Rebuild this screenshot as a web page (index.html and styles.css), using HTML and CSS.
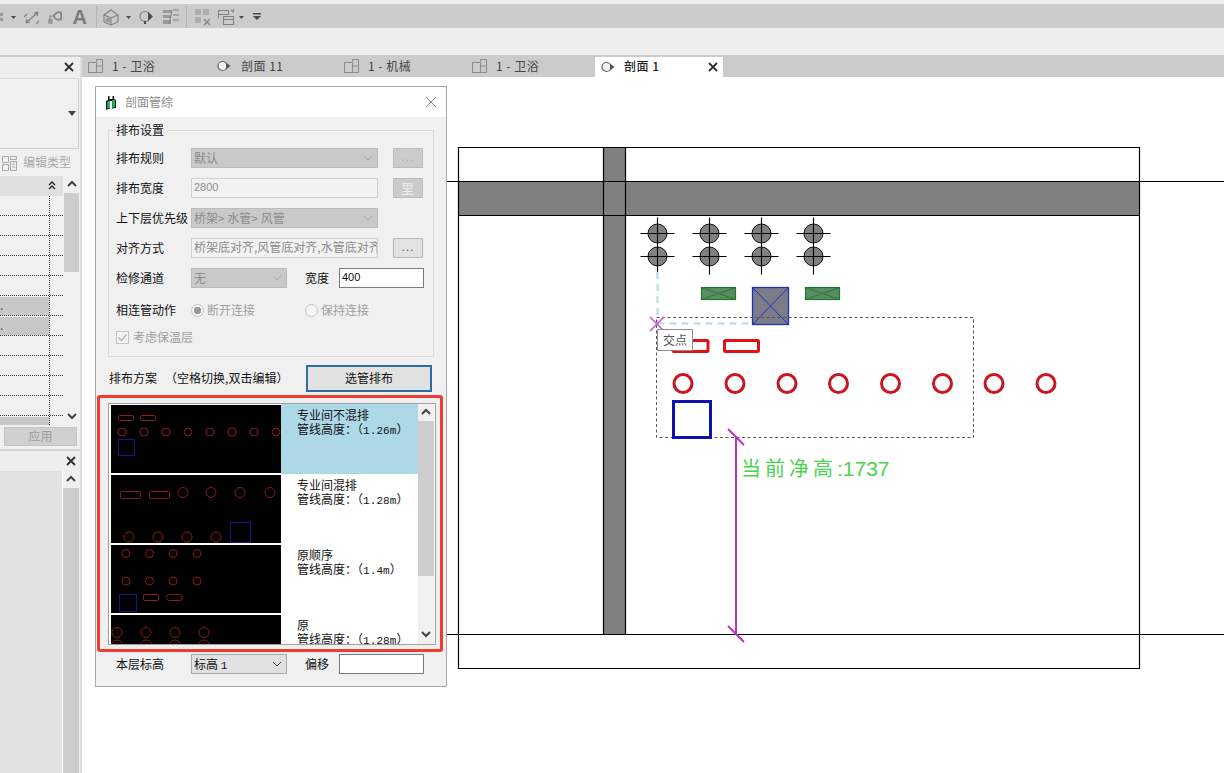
FILE: index.html
```html
<!DOCTYPE html>
<html lang="zh-CN">
<head>
<meta charset="utf-8">
<title>剖面管综</title>
<link rel="stylesheet" href="styles.css">
</head>
<body>
<div class="app">
  <div class="toolbar">
    <svg class="toolbar-icons" width="270" height="24" viewBox="0 4 270 24">
      <path class="ic-fill" d="M0 13h3v3H0zM0 18h3v3H0z"/>
      <path class="ic-dark" d="M11 16h5l-2.500 3z"/>
      <path class="ic-line" d="M26 23L38 12M26 23l1-4M26 23l4-1M38 12l-4 1M38 12l-1 4M24 17l3-3M36 24l3-3"/>
      <path class="ic-line" d="M50 22v-6h5M54 15l4-3h3v8h-3l-4-2z"/><circle class="ic-line" cx="58" cy="16" r="3.500"/><rect class="ic-line" x="49" y="20" width="3" height="3"/>
      <text class="ic-a" x="72.500" y="24">A</text>
      <path class="ic-sep" d="M96.500 6v22M186.500 6v22"/>
      <path class="ic-line" d="M104 15l7-5 7 5v7l-7 3-7-3zM104 15l7 3 7-3M111 18v7"/><circle class="ic-fill" cx="108" cy="20" r="2.500"/>
      <path class="ic-dark" d="M126 16h5l-2.500 3z"/>
      <circle class="ic-line" cx="145" cy="16.500" r="5"/><path class="ic-dark" d="M148 12l5 4.500-5 4.500zM144 21h2v3h-2z"/>
      <path class="ic-fill" d="M163 10h8v3h-8zM163 15h8v3h-8zM163 20h8v4h-8z"/><path class="ic-line" d="M173 10h6M173 15h6M173 20h6M172 10l-3 14"/>
      <path class="ic-pale" d="M195 9h6v6h-6zM203 9h6v6h-6zM195 17h6v6h-6z"/><path class="ic-xstroke" d="M204 19l6 6m0-6l-6 6"/>
      <path class="ic-line" d="M218.500 10.500h10v4h-10zM218.500 14.500v4M223.500 16.500h10v8h-10zM223.500 19.500h10M231 10l2 2 1-3"/>
      <path class="ic-dark" d="M239 16h5l-2.500 3z"/>
      <path class="ic-dark" d="M253 13h8v1.500h-8zM253 16h8l-4 4z"/>
    </svg>
  </div>
  <div class="subbar"></div>
  <div class="tabbar">
    <div class="panel-head"><svg class="x-icon" width="10" height="10" viewBox="0 0 10 10"><path d="M1 1l8 8M9 1l-8 8"/></svg></div>
    <div class="tab"><svg class="tab-icon" width="16" height="14" viewBox="0 0 16 14"><path d="M.5 3.500h8V.5h6v13H.5zM8.500 3.500v10M8.500 7h6"/></svg><span>1 - 卫浴</span></div>
    <div class="tab"><svg class="sec-icon" width="16" height="14" viewBox="0 0 16 14"><circle cx="5.500" cy="7" r="4.500"/><path d="M9 3.500L13.500 7 9 10.500z"/></svg><span>剖面 11</span></div>
    <div class="tab"><svg class="tab-icon" width="16" height="14" viewBox="0 0 16 14"><path d="M.5 3.500h8V.5h6v13H.5zM8.500 3.500v10M8.500 7h6"/></svg><span>1 - 机械</span></div>
    <div class="tab"><svg class="tab-icon" width="16" height="14" viewBox="0 0 16 14"><path d="M.5 3.500h8V.5h6v13H.5zM8.500 3.500v10M8.500 7h6"/></svg><span>1 - 卫浴</span></div>
    <div class="tab tab-active"><svg class="sec-icon" width="16" height="14" viewBox="0 0 16 14"><circle cx="5.500" cy="7" r="4.500"/><path d="M9 3.500L13.500 7 9 10.500z"/></svg><span class="tab-title">剖面 1</span><svg class="x-icon" width="10" height="10" viewBox="0 0 10 10"><path d="M1 1l8 8M9 1l-8 8"/></svg></div>
  </div>
  <div class="main">
    <aside class="side">
      <div class="type-box"><svg class="type-arrow" width="8" height="5" viewBox="0 0 8 5"><path d="M0 0h8L4 5z"/></svg></div>
      <div class="edit-row">
        <svg class="edit-icon" width="16" height="16" viewBox="0 0 16 16"><path d="M.5 1.500h6v6h-6zM.5 9.500h6v6h-6zM8.500 1.500h6v3h-6zM8.500 6.500h6v9h-6zM10 9h3M10 12h3"/></svg>
        <span>编辑类型</span>
      </div>
      <div class="prop-area">
        <div class="prop-table">
          <div class="prop-head"><svg width="8" height="10" viewBox="0 0 8 10"><path d="M1 4l3-3 3 3M1 8l3-3 3 3"/></svg></div>
          <div class="prop-row"><i></i></div>
          <div class="prop-row"><i></i></div>
          <div class="prop-row"><i></i></div>
          <div class="prop-row"><i></i></div>
          <div class="prop-row"><i></i></div>
          <div class="prop-row"><i class="cell-gray">.</i></div>
          <div class="prop-row"><i class="cell-gray">.</i></div>
          <div class="prop-row"><i></i></div>
          <div class="prop-row"><i></i></div>
          <div class="prop-row"><i></i></div>
          <div class="prop-row"><i></i></div>
          <div class="prop-row prop-last"><i class="cell-gray"></i></div>
        </div>
        <div class="side-scroll">
          <svg class="chev" width="16" height="17" viewBox="0 0 16 17"><path d="M4 10l4-4 4 4"/></svg>
          <div class="side-thumb"></div>
          <svg class="chev chev-down" width="16" height="17" viewBox="0 0 16 17"><path d="M4 7l4 4 4-4"/></svg>
        </div>
      </div>
      <div class="apply-row"><div class="apply">应用</div></div>
      <div class="panel-head panel-head-2"><svg class="x-icon" width="10" height="10" viewBox="0 0 10 10"><path d="M1 1l8 8M9 1l-8 8"/></svg></div>
      <div class="browser">
        <div class="browser-list"></div>
        <div class="browser-scroll">
          <svg class="chev" width="16" height="17" viewBox="0 0 16 17"><path d="M4 10l4-4 4 4"/></svg>
          <div class="browser-thumb"></div>
        </div>
      </div>
    </aside>
    <div class="canvas">
      <svg class="drawing" width="1142" height="696" viewBox="82 77 1142 696">
        <defs>
          <g id="hanger">
            <circle class="d-hanger" cx="0" cy="0" r="9.500"/>
            <circle class="d-hanger" cx="0" cy="23" r="9.500"/>
            <path class="d-thin" d="M-17 0H17M-17 23H17M0 -16V41"/>
          </g>
        </defs>
        <rect class="d-gray" x="458" y="181" width="681" height="34"/>
        <rect class="d-gray" x="603" y="148" width="22" height="486"/>
        <path class="d-frame" d="M458.500 147.500H1139.500V668.500H458.500ZM458.500 215.500H1139.500M603.500 147.500V634.500M625.500 147.500V634.500M400 181.500H1224M400 634.500H1224"/>
        <use href="#hanger" x="657.500" y="233.500"/>
        <use href="#hanger" x="709.500" y="233.500"/>
        <use href="#hanger" x="761.500" y="233.500"/>
        <use href="#hanger" x="813.500" y="233.500"/>
        <path class="d-guide" d="M657.500 272V324M657.500 323.500H752"/>
        <g class="d-green"><rect x="701.500" y="287.500" width="34" height="12"/><path d="M701.500 287.500l34 12m0-12l-34 12"/></g>
        <g class="d-green"><rect x="805.500" y="287.500" width="34" height="12"/><path d="M805.500 287.500l34 12m0-12l-34 12"/></g>
        <g class="d-duct"><rect x="752.500" y="287.500" width="36" height="37"/><path d="M752.500 287.500l36 37m0-37l-36 37"/></g>
        <rect class="d-select" x="656.500" y="317.500" width="317" height="120"/>
        <path class="d-pink" d="M650 317l14 14M664 317l-14 14"/>
        <rect class="d-red" x="673" y="340.500" width="35" height="11" rx="1"/>
        <rect class="d-red" x="724.500" y="340.500" width="34" height="11" rx="1"/>
        <circle class="d-pipe" cx="683" cy="383.500" r="9"/>
        <circle class="d-pipe" cx="735" cy="383.500" r="9"/>
        <circle class="d-pipe" cx="787" cy="383.500" r="9"/>
        <circle class="d-pipe" cx="838.500" cy="383.500" r="9"/>
        <circle class="d-pipe" cx="890.500" cy="383.500" r="9"/>
        <circle class="d-pipe" cx="942.500" cy="383.500" r="9"/>
        <circle class="d-pipe" cx="994" cy="383.500" r="9"/>
        <circle class="d-pipe" cx="1046" cy="383.500" r="9"/>
        <rect class="d-blue" x="673.500" y="401.500" width="37" height="36"/>
        <path class="d-dim" d="M736 437V634M728 429l16 16M728 626l16 16"/>
        <text class="d-note" x="741" y="476"><tspan class="d-note-cjk">当前净高</tspan>:1737</text>
      </svg>
      <div class="tooltip">交点</div>

      <div class="dialog">
        <div class="dlg-title">
          <svg class="dlg-logo" width="12" height="15" viewBox="0 0 12 15"><path class="logo-black" d="M1 6l2-1V1h1.500v3h3V1H9v3l2 1v8l-4 .5V6H5v7.500L1 15z"/><path class="logo-green" d="M2.200 6.800L5 5.500v7.200l-2.800 1zM7.200 5h2.800v7.200l-2.800.5z"/></svg>
          <span>剖面管综</span>
          <svg class="dlg-close" width="12" height="12" viewBox="0 0 12 12"><path d="M1 1l10 10M11 1L1 11"/></svg>
        </div>
        <fieldset class="group">
          <legend>排布设置</legend>
          <div class="row">
            <label class="lbl">排布规则</label>
            <div class="combo combo-wide"><span>默认</span><svg width="10" height="6" viewBox="0 0 10 6"><path d="M1 1l4 4 4-4"/></svg></div>
            <div class="btn btn-off">...</div>
          </div>
          <div class="row">
            <label class="lbl">排布宽度</label>
            <div class="edit edit-off num-text">2800</div>
            <div class="btn btn-off btn-glyph">里</div>
          </div>
          <div class="row">
            <label class="lbl">上下层优先级</label>
            <div class="combo combo-wide"><span>桥架&gt; 水管&gt; 风管</span><svg width="10" height="6" viewBox="0 0 10 6"><path d="M1 1l4 4 4-4"/></svg></div>
          </div>
          <div class="row">
            <label class="lbl">对齐方式</label>
            <div class="edit edit-off">桥架底对齐,风管底对齐,水管底对齐</div>
            <div class="btn btn-on">...</div>
          </div>
          <div class="row">
            <label class="lbl">检修通道</label>
            <div class="combo combo-short"><span>无</span><svg width="10" height="6" viewBox="0 0 10 6"><path d="M1 1l4 4 4-4"/></svg></div>
            <label class="lbl-short">宽度</label>
            <div class="edit edit-on num-text">400</div>
          </div>
          <div class="row row-radio">
            <label class="lbl">相连管动作</label>
            <div class="opt opt-first"><span class="radio radio-on"></span><span class="opt-text">断开连接</span></div>
            <div class="opt"><span class="radio"></span><span class="opt-text">保持连接</span></div>
          </div>
          <div class="row row-check">
            <svg class="check" width="13" height="13" viewBox="0 0 13 13"><rect x=".5" y=".5" width="12" height="12"/><path d="M2.500 6.500l3 3 5-6"/></svg>
            <span class="opt-text">考虑保温层</span>
          </div>
        </fieldset>
        <div class="plan-row">
          <span class="plan-caption">排布方案   （空格切换,双击编辑）</span>
          <div class="pick-btn">选管排布</div>
        </div>
        <div class="highlight">
          <div class="plan-list">
            <div class="plan-items">
              <div class="plan plan-selected">
                <svg class="thumb" width="170" height="68" viewBox="0 0 170 68">
                  <rect class="t-red" x="7.500" y="10.500" width="15" height="5" rx="1"/><rect class="t-red" x="29.500" y="10.500" width="15" height="5" rx="1"/>
                  <circle class="t-red" cx="11" cy="27" r="4"/><circle class="t-red" cx="33" cy="27" r="4"/><circle class="t-red" cx="55" cy="27" r="4"/><circle class="t-red" cx="77" cy="27" r="4"/><circle class="t-red" cx="99" cy="27" r="4"/><circle class="t-red" cx="121" cy="27" r="4"/><circle class="t-red" cx="143" cy="27" r="4"/><circle class="t-red" cx="165" cy="27" r="4"/>
                  <rect class="t-blue" x="7.500" y="34.500" width="16" height="16"/>
                </svg>
                <div class="plan-text"><div>专业间不混排</div><div>管线高度：（<span class="num">1.26m</span>）</div></div>
              </div>
              <div class="plan">
                <svg class="thumb" width="170" height="68" viewBox="0 0 170 68">
                  <rect class="t-red" x="9.500" y="16.500" width="20" height="7" rx="1"/><rect class="t-red" x="38.500" y="16.500" width="20" height="7" rx="1"/>
                  <circle class="t-red" cx="72" cy="17.500" r="5"/><circle class="t-red" cx="100" cy="17.500" r="5"/><circle class="t-red" cx="129" cy="17.500" r="5"/><circle class="t-red" cx="159" cy="17.500" r="5"/>
                  <circle class="t-red" cx="18" cy="62" r="5"/><circle class="t-red" cx="47" cy="62" r="5"/><circle class="t-red" cx="76" cy="62" r="5"/><circle class="t-red" cx="105" cy="62" r="5"/>
                  <rect class="t-blue" x="119.500" y="47.500" width="20" height="20"/>
                </svg>
                <div class="plan-text"><div>专业间混排</div><div>管线高度：（<span class="num">1.28m</span>）</div></div>
              </div>
              <div class="plan">
                <svg class="thumb" width="170" height="68" viewBox="0 0 170 68">
                  <circle class="t-red" cx="15" cy="8.500" r="4"/><circle class="t-red" cx="38.500" cy="8.500" r="4"/><circle class="t-red" cx="62" cy="8.500" r="4"/><circle class="t-red" cx="86" cy="8.500" r="4"/>
                  <circle class="t-red" cx="15" cy="36" r="4"/><circle class="t-red" cx="38.500" cy="36" r="4"/><circle class="t-red" cx="62" cy="36" r="4"/><circle class="t-red" cx="86" cy="36" r="4"/>
                  <rect class="t-blue" x="8.500" y="49.500" width="17" height="17"/>
                  <rect class="t-red" x="32.500" y="49.500" width="15" height="6" rx="1"/><rect class="t-red" x="55.500" y="49.500" width="16" height="6" rx="3"/>
                </svg>
                <div class="plan-text"><div>原顺序</div><div>管线高度：（<span class="num">1.4m</span>）</div></div>
              </div>
              <div class="plan">
                <svg class="thumb" width="170" height="68" viewBox="0 0 170 68">
                  <circle class="t-red" cx="6" cy="17.500" r="5"/><circle class="t-red" cx="35" cy="17.500" r="5"/><circle class="t-red" cx="64" cy="17.500" r="5"/><circle class="t-red" cx="93" cy="17.500" r="5"/>
                  <circle class="t-red" cx="6" cy="31" r="6"/><circle class="t-red" cx="35" cy="31" r="6"/><circle class="t-red" cx="64" cy="31" r="6"/><circle class="t-red" cx="93" cy="31" r="6"/>
                </svg>
                <div class="plan-text"><div>原</div><div>管线高度：（<span class="num">1.28m</span>）</div></div>
              </div>
            </div>
            <div class="plan-scroll">
              <svg class="chev" width="16" height="17" viewBox="0 0 16 17"><path d="M4 10l4-4 4 4"/></svg>
              <div class="plan-thumb"></div>
              <svg class="chev chev-bottom" width="16" height="17" viewBox="0 0 16 17"><path d="M4 7l4 4 4-4"/></svg>
            </div>
          </div>
        </div>
        <div class="level-row">
          <label class="lbl">本层标高</label>
          <div class="combo combo-short combo-on"><span>标高 <span class="num">1</span></span><svg width="10" height="6" viewBox="0 0 10 6"><path d="M1 1l4 4 4-4"/></svg></div>
          <label class="lbl-short">偏移</label>
          <div class="edit edit-on"></div>
        </div>
      </div>
    </div>
  </div>
</div>
</body>
</html>
```

FILE: styles.css
```css
* { box-sizing: border-box; }
html, body { margin: 0; padding: 0; }
body {
  width: 1224px;
  height: 773px;
  overflow: hidden;
  background: #eeeeee;
  color: #111;
  font-family: "Noto Sans CJK SC", "Liberation Sans", sans-serif;
  font-size: 12px;
}
.app { display: flex; flex-direction: column; height: 773px; }

/* toolbar */
.toolbar { margin-top: 4px; height: 24px; background: #cbcbcb; flex: none; }
.toolbar-icons { display: block; }
.ic-fill { fill: #9a9a9a; }
.ic-pale { fill: #aeaeae; }
.ic-dark { fill: #4a4a4a; }
.ic-line { fill: none; stroke: #808080; stroke-width: 1.100; }
.ic-sep { stroke: #b4b4b4; stroke-width: 1; }
.ic-a { font-family: "Liberation Sans", sans-serif; font-weight: 700; font-size: 20px; fill: #7c7c7c; }
.ic-xstroke { fill: none; stroke: #8a8a8a; stroke-width: 1.500; }
.subbar { height: 27px; flex: none; background: #eeeeee; }

/* tabs */
.tabbar { display: flex; height: 22px; flex: none; background: #cbcbcb; }
.panel-head {
  width: 82px;
  margin-top: 2px;
  background: #eeeeee;
  display: flex;
  align-items: center;
  justify-content: flex-end;
  padding-right: 6px;
  border-right: 2px solid #dcdcdc;
  flex: none;
}
.x-icon { flex: none; }
.x-icon path { stroke: #2e2e2e; stroke-width: 1.800; fill: none; }
.tab {
  width: 128px;
  display: flex;
  align-items: center;
  gap: 8px;
  padding-left: 6px;
  color: #444;
  font-size: 12px;
  letter-spacing: .5px;
  flex: none;
}
.tab span { padding-bottom: 2px; }
.tab:nth-child(3) { padding-left: 7px; }
.tab-active {
  background: #ffffff;
  margin-top: 2px;
  margin-left: 1px;
  color: #222;
  font-weight: 500;
  padding-right: 5px;
  gap: 7px;
}
.tab-active span { padding-bottom: 4px; }
.tab-title { flex: 1; }
.tab-icon path { fill: none; stroke: #8c8c8c; stroke-width: 1; }
.sec-icon circle { fill: #f2f2f2; stroke: #666; stroke-width: 1.200; }
.sec-icon path { fill: #555; }

/* main */
.main { flex: 1; display: flex; min-height: 0; }
.side {
  width: 82px;
  flex: none;
  display: flex;
  flex-direction: column;
  background: #f0f0f0;
  border-right: 2px solid #dcdcdc;
  overflow: hidden;
}
.type-box {
  height: 71px;
  margin: 1px 0 0 0;
  width: 79px;
  border-right: 1px solid #cfcfcf;
  border-bottom: 1px solid #cfcfcf;
  border-top: 1px solid #d8d8d8;
  display: flex;
  justify-content: flex-end;
  align-items: center;
  padding-right: 2px;
  flex: none;
}
.type-arrow path { fill: #444; }
.edit-row {
  height: 27px;
  display: flex;
  align-items: center;
  gap: 5px;
  padding-left: 2px;
  color: #a8a8a8;
  flex: none;
}
.edit-row span { padding-bottom: 3px; }
.edit-icon path { fill: none; stroke: #a8a8a8; stroke-width: 1; }
.prop-area { height: 249px; display: flex; flex: none; }
.prop-table { width: 63px; flex: none; overflow: hidden; }
.prop-head {
  height: 20px;
  background: #e0e0e0;
  display: flex;
  align-items: center;
  justify-content: flex-end;
  padding-right: 7px;
}
.prop-head path { fill: none; stroke: #222; stroke-width: 1.400; }
.prop-row {
  height: 20px;
  border-bottom: 1px dotted #333;
  display: flex;
}
.prop-row i {
  display: block;
  width: 50px;
  border-right: 1px dotted #333;
  font-style: normal;
  line-height: 16px;
  padding-top: 1px;
  color: #555;
}
.prop-row .cell-gray { background: #c8c8c8; background-clip: content-box; }
.prop-last { border-bottom: 0; height: 9px; }
.side-scroll { width: 15px; margin-left: 1px; display: flex; flex-direction: column; flex: none; }
.chev { display: block; flex: none; }
.chev path { fill: none; stroke: #444; stroke-width: 2; }
.side-thumb { height: 79px; background: #cdcdcd; }
.chev-down { margin-top: auto; margin-bottom: 1px; }
.apply-row { height: 24px; padding: 2px 1px 2px 4px; flex: none; }
.apply {
  height: 19px;
  width: 73px;
  background: #d0d0d0;
  border: 1px solid #c4c4c4;
  color: #9c9c9c;
  text-align: center;
  line-height: 16px;
}
.panel-head-2 {
  width: 80px;
  margin: 0;
  height: 22px;
  border-right: 0;
  border-top: 2px solid #d4d4d4;
  padding-right: 4px;
  background: #eeeeee;
}
.browser { flex: 1; display: flex; min-height: 0; }
.browser-list { width: 63px; background: #e2e2e2; border-right: 1px solid #fff; flex: none; }
.browser-scroll { width: 16px; display: flex; flex-direction: column; flex: none; }
.browser-thumb { flex: 1; background: #cdcdcd; }

/* canvas */
.canvas { flex: 1; position: relative; background: #ffffff; overflow: hidden; }
.drawing { position: absolute; left: 0; top: 0; display: block; }
.d-gray { fill: #808080; }
.d-frame { fill: none; stroke: #000; stroke-width: 1.200; }
.d-hanger { fill: #808080; stroke: #111; stroke-width: 1; }
.d-thin { fill: none; stroke: #000; stroke-width: 1.100; }
.d-guide { fill: none; stroke: #b9d7e4; stroke-width: 2; stroke-dasharray: 7 5; }
.d-green rect { fill: #5c8a62; stroke: #1d7a2c; stroke-width: 1.200; }
.d-green path { fill: none; stroke: #1d7a2c; stroke-width: .9; }
.d-duct rect { fill: #7b7b8a; stroke: #1f35b8; stroke-width: 1.300; }
.d-duct path { fill: none; stroke: #1f35b8; stroke-width: 1; }
.d-select { fill: none; stroke: #555; stroke-width: 1; stroke-dasharray: 3 2.500; }
.d-pink { fill: none; stroke: #c45ccc; stroke-width: 1.600; }
.d-red { fill: #fff; stroke: #e01218; stroke-width: 3; }
.d-pipe { fill: #fff; stroke: #c9161f; stroke-width: 3; }
.d-blue { fill: #fff; stroke: #1010ae; stroke-width: 3; }
.d-dim { fill: none; stroke: #c030c8; stroke-width: 2; }
.d-note { font-family: "Liberation Sans", sans-serif; font-size: 21px; fill: #47d44c; }
.d-note-cjk { font-family: "Noto Sans CJK SC", sans-serif; font-size: 20px; font-weight: 400; letter-spacing: 4px; }
.tooltip {
  position: absolute;
  left: 575px;
  top: 252px;
  width: 36px;
  height: 22px;
  background: #fff;
  border: 1px solid #8e8e8e;
  color: #555;
  text-align: center;
  line-height: 19px;
  font-size: 12px;
}

/* dialog */
.dialog {
  position: absolute;
  left: 13px;
  top: 9px;
  width: 352px;
  height: 601px;
  background: #f0f0f0;
  border: 1px solid #a8a8a8;
}
.dlg-title {
  height: 30px;
  background: #ffffff;
  display: flex;
  align-items: center;
  padding: 0 9px 0 9px;
  color: #8a8a8a;
  gap: 8px;
}
.dlg-title span { padding-bottom: 2px; }
.dlg-logo { flex: none; }
.logo-black { fill: #111; }
.logo-green { fill: #20b468; }
.dlg-close { margin-left: auto; }
.dlg-close path { fill: none; stroke: #8f8f8f; stroke-width: 1; }
.group {
  margin: 6px 0 0 12px;
  width: 326px;
  height: 234px;
  padding: 11px 0 0 7px;
  border: 1px solid #dadada;
  min-width: 0;
}
.group legend { padding: 0 2px 0 0; margin-left: 0; line-height: 14px; color: #111; font-size: 12px; }
.row { display: flex; align-items: center; height: 20px; margin-bottom: 10px; }
.lbl { width: 75px; flex: none; white-space: nowrap; color: #111; padding-bottom: 2px; }
.lbl-short { width: 34px; margin-left: 18px; flex: none; padding-bottom: 2px; }
.combo {
  height: 20px;
  background: #c9c9c9;
  border: 1px solid #bcbcbc;
  display: flex;
  align-items: center;
  justify-content: space-between;
  padding: 0 4px 0 2px;
  color: #8c8c8c;
  flex: none;
  white-space: nowrap;
}
.combo > span { padding-bottom: 2px; }
.combo svg path { fill: none; stroke: #aaa; stroke-width: 1; }
.combo-wide { width: 187px; }
.combo-short { width: 96px; }
.combo-on { background: #e1e1e1; border-color: #a8a8a8; color: #111; }
.combo-on svg path { stroke: #444; }
.edit {
  height: 20px;
  padding: 0 2px;
  line-height: 15px;
  overflow: hidden;
  white-space: nowrap;
  flex: none;
}
.edit-off { width: 187px; background: #f2f2f2; border: 1px solid #d0d0d0; color: #8c8c8c; }
.edit-on { width: 85px; background: #ffffff; border: 1px solid #7a7a7a; color: #111; }
.num-text { font-family: "Liberation Sans", sans-serif; font-size: 11px; line-height: 17px; }
.edit-off.num-text { color: #8c8c8c; }
.btn {
  width: 30px;
  height: 20px;
  margin-left: 15px;
  border: 1px solid #bcbcbc;
  text-align: center;
  line-height: 16px;
  font-family: "Liberation Sans", sans-serif;
  letter-spacing: 1px;
  flex: none;
}
.btn-off { background: #cbcbcb; color: #a8a8a8; }
.btn-on { background: #e3e3e3; color: #555; border-color: #b8b8b8; }
.btn-glyph { font-family: "Noto Sans CJK SC", sans-serif; color: #eeeeee; line-height: 17px; font-size: 13px; }
.row-radio { margin: 12px 0 7px 0; }
.opt { display: flex; align-items: center; gap: 3px; color: #a0a0a0; width: 114px; flex: none; white-space: nowrap; }
.opt-text { padding-bottom: 2px; }
.radio {
  width: 13px;
  height: 13px;
  border: 1px solid #c4c4c4;
  border-radius: 50%;
  background: #f6f6f6;
  flex: none;
}
.radio-on { background: radial-gradient(circle, #9a9a9a 0, #9a9a9a 3.500px, #f6f6f6 4px); }
.row-check { gap: 4px; color: #a0a0a0; margin: 0; }
.check { flex: none; }
.check rect { fill: #f2f2f2; stroke: #c4c4c4; }
.check path { fill: none; stroke: #b0b0b0; stroke-width: 1.300; }
.plan-row {
  margin: 8px 14px 0 13px;
  height: 27px;
  display: flex;
  align-items: center;
  justify-content: space-between;
}
.plan-caption { white-space: pre; padding-bottom: 2px; }
.pick-btn {
  width: 126px;
  height: 27px;
  background: #e1e1e1;
  border: 2px solid #2c6f9e;
  text-align: center;
  line-height: 21px;
}
.highlight {
  margin: 3px 0 0 1px;
  width: 346px;
  height: 257px;
  border: 3px solid #f03c30;
  border-radius: 3px;
  padding: 5px 0 0 8px;
}
.plan-list {
  width: 328px;
  height: 242px;
  border: 1px solid #a0a0a0;
  background: #fff;
  display: flex;
  overflow: hidden;
}
.plan-items { width: 309px; flex: none; overflow: hidden; background: #fff; }
.plan { height: 70px; display: flex; }
.thumb { display: block; margin: 1px 0 1px 2px; background: #000; flex: none; }
.plan-text { padding: 4px 0 0 16px; line-height: 14px; flex: 1; white-space: nowrap; color: #111; }
.plan-selected .plan-text { background: #add8e6; }
.num { font-family: "Liberation Mono", monospace; font-size: 11px; letter-spacing: .1px; }
.t-red { fill: none; stroke: #8e1c1c; stroke-width: 1; }
.t-blue { fill: none; stroke: #14148c; stroke-width: 1; }
.plan-scroll { width: 16px; background: #f0f0f0; display: flex; flex-direction: column; flex: none; }
.plan-thumb { height: 155px; background: #cdcdcd; }
.chev-bottom { margin-top: auto; margin-bottom: 2px; }
.level-row { display: flex; align-items: center; margin: 2px 0 0 20px; height: 20px; }
```
